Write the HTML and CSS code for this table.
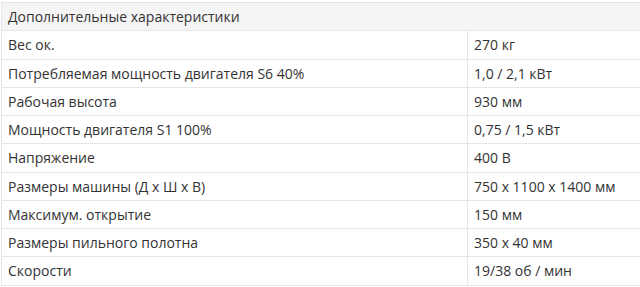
FILE: index.html
```html
<!DOCTYPE html>
<html lang="ru">
<head>
<meta charset="utf-8">
<link rel="stylesheet" href="styles.css">
</head>
<body>
<div class="wrap">
<table class="specs">
<thead>
<tr><th colspan="2">Дополнительные характеристики</th></tr>
</thead>
<tbody>
<tr><td class="name">Вес ок.</td><td>270 кг</td></tr>
<tr><td class="name">Потребляемая мощность двигателя S6 40%</td><td>1,0 / 2,1 кВт</td></tr>
<tr><td class="name">Рабочая высота</td><td>930 мм</td></tr>
<tr><td class="name">Мощность двигателя S1 100%</td><td>0,75 / 1,5 кВт</td></tr>
<tr><td class="name">Напряжение</td><td>400 В</td></tr>
<tr><td class="name">Размеры машины (Д х Ш х В)</td><td>750 x 1100 x 1400 мм</td></tr>
<tr><td class="name">Максимум. открытие</td><td>150 мм</td></tr>
<tr><td class="name">Размеры пильного полотна</td><td>350 x 40 мм</td></tr>
<tr><td class="name">Скорости</td><td>19/38 об / мин</td></tr>
</tbody>
</table>
</div>
</body>
</html>
```
FILE: styles.css
```css
html, body {
  margin: 0;
  padding: 0;
  background: #fff;
  overflow: hidden;
}
.wrap {
  padding: 2px 0 0 1px;
  width: 650px;
}
.specs {
  width: 100%;
  border-collapse: collapse;
  font-family: "Open Sans", "Noto Sans", sans-serif;
  font-size: 14px;
  color: #333;
}
.specs th,
.specs td {
  border: 1px solid #e6e6e6;
  height: 28.25px;
  padding: 0 6px;
  text-align: left;
  font-weight: normal;
  vertical-align: middle;
  box-sizing: border-box;
}
.specs th {
  background: #f5f5f5;
}
.specs td.name {
  width: 466px;
}
```
